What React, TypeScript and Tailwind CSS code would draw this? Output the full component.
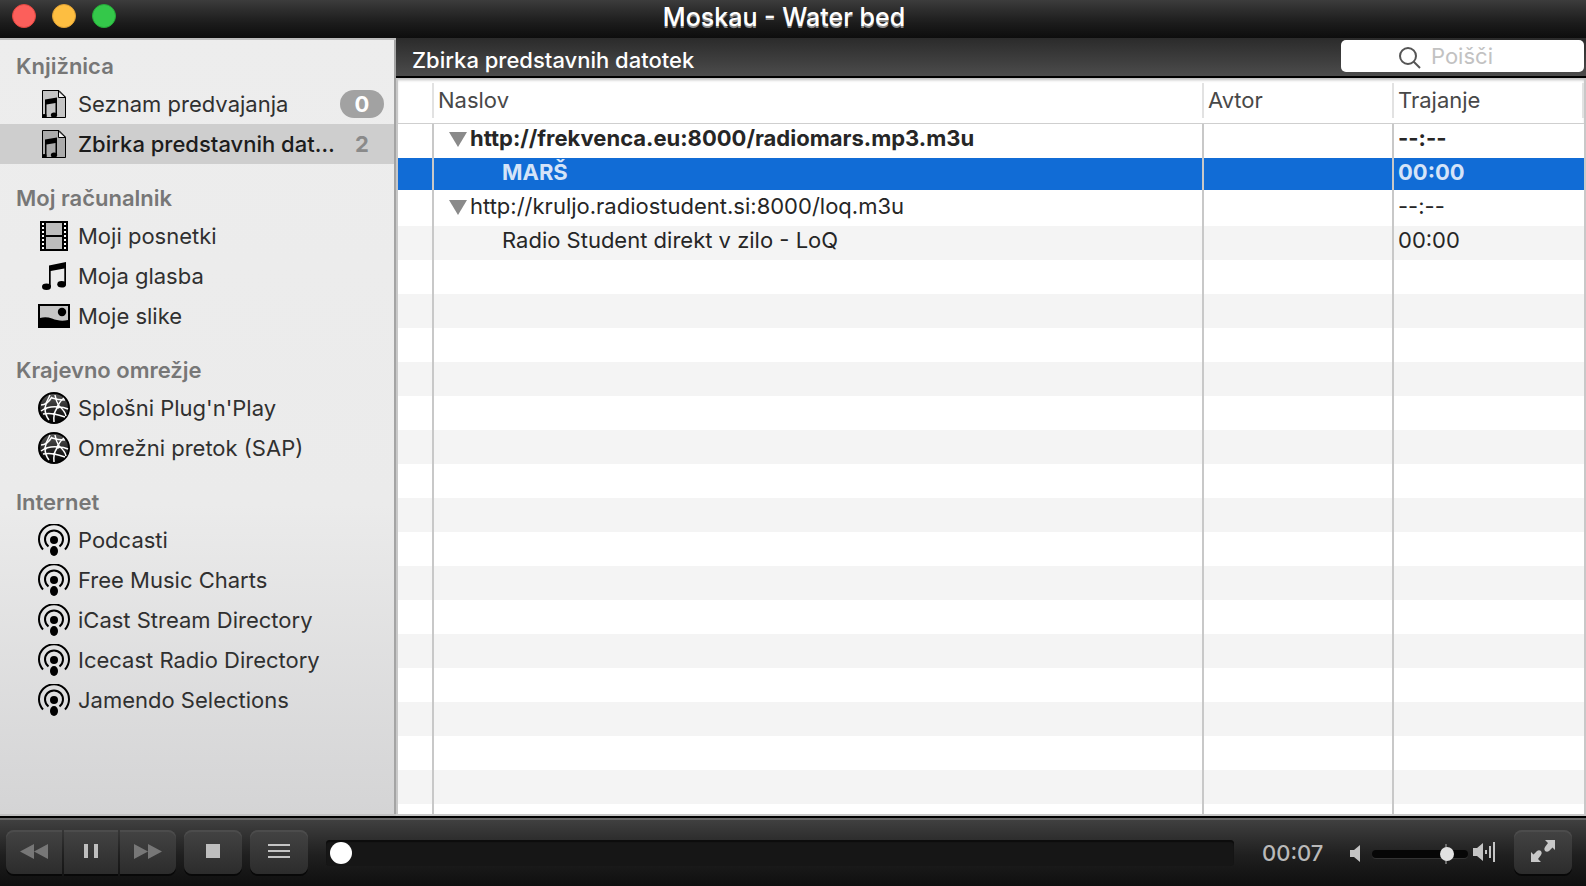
import { useState } from "react";
import type { ComponentType } from "react";

type IconProps = { className?: string };

function PlaylistIcon({ className }: IconProps) {
  return (
    <svg viewBox="0 0 24 28" className={className} aria-hidden="true">
      <path d="M.5 .5H17L23.5 7V27.5H.5Z" fill="#000" fillOpacity=".17" stroke="#000" />
      <path d="M16.5 1V7.5H23.5Z" fill="#f4f4f4" stroke="#000" />
      <path d="M3 9.500L15 7.500V24H13.500V13L4.500 14.500V27H3Z" fill="#000" />
      <ellipse cx="12" cy="25" rx="3.200" ry="2.500" fill="#000" />
      <path d="M0 24.500Q2 23.500 4.500 24.500V28H0Z" fill="#000" />
    </svg>
  );
}

function FilmIcon({ className }: IconProps) {
  const holes = [2, 6, 10, 14, 18, 22, 26];
  return (
    <svg viewBox="0 0 28 30" className={className} aria-hidden="true">
      <path d="M0 0H28V30H0Z" fill="#000" />
      <path d="M6 2H22V14H6ZM6 16H22V28H6Z" fill="#bcbcbc" />
      {holes.map((y) => (
        <path key={y} d={`M2 ${y}h2v2h-2zM24 ${y}h2v2h-2z`} fill="#fff" />
      ))}
    </svg>
  );
}

function MusicIcon({ className }: IconProps) {
  return (
    <svg viewBox="0 0 24 28" className={className} aria-hidden="true">
      <path d="M7 3.500L24 0V22.500H22.300V6.500L8.700 9V25H7Z" />
      <ellipse cx="4.500" cy="24.800" rx="4.500" ry="3.200" />
      <ellipse cx="19.700" cy="22.300" rx="4.400" ry="3.200" />
    </svg>
  );
}

function PictureIcon({ className }: IconProps) {
  return (
    <svg viewBox="0 0 32 24" className={className} aria-hidden="true">
      <path d="M0 0H32V24H0Z" />
      <path d="M2 2H30V16C24 17.500 19 16.500 14 14.500C10 13 6 12.800 2 14Z" fill="#c6c6c6" />
      <circle cx="24" cy="8" r="4.200" />
    </svg>
  );
}

function NetworkIcon({ className }: IconProps) {
  return (
    <svg viewBox="0 0 32 32" className={className} aria-hidden="true">
      <defs>
        <linearGradient id="globe" x1="0" y1="0" x2="0" y2="1">
          <stop offset="0" stopColor="#5a5a5a" />
          <stop offset=".6" stopColor="#222" />
          <stop offset="1" stopColor="#000" />
        </linearGradient>
      </defs>
      <circle cx="16" cy="16" r="15" fill="url(#globe)" stroke="#000" strokeWidth="2" />
      <g fill="none" stroke="#fff" strokeWidth="1.500">
        <path d="M12 3Q8 10 7 16Q7 23 11 28" />
        <path d="M3 13Q9 13 14 5" />
        <path d="M17 3Q18 9 21 14Q27 19 28 24" />
        <path d="M26 6Q21 10 19 16Q15 22 16 30" />
        <path d="M3 19Q10 14 20 15Q26 15 30 17" />
        <path d="M14 6Q20 8 27 8" />
        <path d="M5 22Q11 21 16 22Q21 23 27 25" />
      </g>
      <g fill="#fff">
        <circle cx="20" cy="15" r="1.700" />
        <circle cx="7.500" cy="16.500" r="1.300" />
        <circle cx="16" cy="22" r="1.300" />
      </g>
    </svg>
  );
}

function PodcastIcon({ className }: IconProps) {
  return (
    <svg viewBox="0 0 32 32" className={className} aria-hidden="true">
      <g fill="none" stroke="#000" strokeWidth="2">
        <path d="M5 25.500A15 15 0 1 1 27 25.500" />
        <path d="M10.500 22.500A9 9 0 1 1 21.500 22.500" />
      </g>
      <circle cx="16" cy="16" r="4" />
      <ellipse cx="16" cy="27" rx="4" ry="5" />
    </svg>
  );
}

interface Item {
  label: string;
  icon: ComponentType<IconProps>;
  iconClass: string;
  badge?: string;
}

const sections: { title: string; items: Item[] }[] = [
  {
    title: "Knjižnica",
    items: [
      { label: "Seznam predvajanja", icon: PlaylistIcon, iconClass: "h-7 w-6", badge: "0" },
      { label: "Zbirka predstavnih dat…", icon: PlaylistIcon, iconClass: "h-7 w-6", badge: "2" },
    ],
  },
  {
    title: "Moj računalnik",
    items: [
      { label: "Moji posnetki", icon: FilmIcon, iconClass: "h-[30px] w-7" },
      { label: "Moja glasba", icon: MusicIcon, iconClass: "h-7 w-6" },
      { label: "Moje slike", icon: PictureIcon, iconClass: "h-6 w-8" },
    ],
  },
  {
    title: "Krajevno omrežje",
    items: [
      { label: "Splošni Plug'n'Play", icon: NetworkIcon, iconClass: "size-8" },
      { label: "Omrežni pretok (SAP)", icon: NetworkIcon, iconClass: "size-8" },
    ],
  },
  {
    title: "Internet",
    items: [
      { label: "Podcasti", icon: PodcastIcon, iconClass: "size-8" },
      { label: "Free Music Charts", icon: PodcastIcon, iconClass: "size-8" },
      { label: "iCast Stream Directory", icon: PodcastIcon, iconClass: "size-8" },
      { label: "Icecast Radio Directory", icon: PodcastIcon, iconClass: "size-8" },
      { label: "Jamendo Selections", icon: PodcastIcon, iconClass: "size-8" },
    ],
  },
];

const tracks = [
  { title: "http://frekvenca.eu:8000/radiomars.mp3.m3u", time: "--:--", group: true, playing: true },
  { title: "MARŠ", time: "00:00", group: false, playing: true },
  { title: "http://kruljo.radiostudent.si:8000/loq.m3u", time: "--:--", group: true, playing: false },
  { title: "Radio Student direkt v zilo - LoQ", time: "00:00", group: false, playing: false },
];

const emptyRows = Array.from({ length: 17 }, (_, i) => i + tracks.length);

function TitleBar() {
  return (
    <header className="flex h-[38px] shrink-0 items-start bg-linear-to-b from-[#3c3c3c] via-[#1c1c1c] via-60% to-[#0d0d0d] pl-3">
      <div className="flex w-[104px] gap-4 pt-1">
        <button aria-label="Zapri" className="size-6 rounded-full border border-[#e2463f] bg-[#fc5f5b]" />
        <button aria-label="Pomanjšaj" className="size-6 rounded-full border border-[#dfa033] bg-[#fdbe41]" />
        <button aria-label="Povečaj" className="size-6 rounded-full border border-[#24ab37] bg-[#34c84a]" />
      </div>
      <h1 className="flex-1 pr-[134px] text-center text-[25px] leading-[34px] font-medium text-white [text-shadow:0_2px_0_#8c8c8c]">
        Moskau - Water bed
      </h1>
    </header>
  );
}

function Sidebar() {
  const [selected, setSelected] = useState("Zbirka predstavnih dat…");
  return (
    <nav className="w-[396px] shrink-0 overflow-hidden border-t-2 border-b-2 border-t-[#bdbdbd] border-b-[#c0c0c0] bg-linear-to-b from-[#ededed] via-[#ebebeb] via-60% to-[#d4d4d5]">
      <div className="h-full border-r-2 border-[#a4a4a4]">
        {sections.map((section) => (
          <section key={section.title} className="group">
            <h2 className="flex h-[52px] items-center pt-4 pl-4 text-[22px] leading-7 font-semibold text-[#777] group-first:h-11 group-first:pt-2">
              {section.title}
            </h2>
            <ul>
              {section.items.map(({ label, icon: Icon, iconClass, badge }) => (
                <li key={label}>
                  <button
                    onClick={() => setSelected(label)}
                    className={`flex h-10 w-full items-center pr-[10px] pl-[38px] text-left text-[22px] leading-7 ${
                      label === selected ? "bg-[#cecece] font-medium text-[#1c1c1c]" : "text-[#303030]"
                    }`}
                  >
                    <span className="flex w-8 shrink-0 justify-center">
                      <Icon className={iconClass} />
                    </span>
                    <span className="flex-1 pl-2 whitespace-nowrap">{label}</span>
                    {badge && (
                      <span
                        className={`w-11 shrink-0 rounded-full text-center font-bold ${
                          label === selected ? "text-[#8a8a8a]" : "bg-[#a2a2a2] text-white"
                        }`}
                      >
                        {badge}
                      </span>
                    )}
                  </button>
                </li>
              ))}
            </ul>
          </section>
        ))}
      </div>
    </nav>
  );
}

function Toolbar() {
  return (
    <div className="flex h-10 shrink-0 items-start justify-between border-b-2 border-black bg-linear-to-b from-[#2b2b2b] to-[#4c4c4c] pr-0.5 pl-4">
      <h2 className="pt-2 text-[22px] leading-7 font-medium text-white">Zbirka predstavnih datotek</h2>
      <label className="mt-0.5 flex h-8 w-[243px] items-center rounded-[5px] bg-white pl-[58px]">
        <svg viewBox="0 0 22 22" className="mt-1 size-[22px] shrink-0" fill="none" stroke="#555" strokeWidth="2">
          <circle cx="9" cy="9" r="8" />
          <path d="M14.500 14.500L21 21" />
        </svg>
        <input
          type="search"
          aria-label="Poišči"
          placeholder="Poišči"
          className="w-full min-w-0 pl-[10px] text-[22px] leading-7 outline-none placeholder:text-[#c2c2c2]"
        />
      </label>
    </div>
  );
}

function HeadCell({ children }: { children: string }) {
  return (
    <th scope="col" className="group border-b border-[#cfcfcf] p-0 text-left font-normal">
      <div className="-ml-0.5 mt-[5px] mb-[5px] h-[35px] border-l-2 border-[#e2e2e2] pl-1 leading-[35px] text-[#484848] group-last:border-r-2">
        {children}
      </div>
    </th>
  );
}

function Playlist() {
  const [current, setCurrent] = useState(1);
  return (
    <div className="min-h-0 flex-1 overflow-hidden border-x-2 border-b-2 border-[#c8c8c8] bg-white shadow-[inset_0_3px_3px_-1px_#bbb]">
      <table className="w-full table-fixed border-separate border-spacing-0 text-[22px]">
        <colgroup>
          <col className="w-9" />
          <col />
          <col className="w-[190px]" />
          <col className="w-[190px]" />
        </colgroup>
        <thead>
          <tr>
            <td className="border-b border-[#cfcfcf] p-0" />
            <HeadCell>Naslov</HeadCell>
            <HeadCell>Avtor</HeadCell>
            <HeadCell>Trajanje</HeadCell>
          </tr>
        </thead>
        <tbody className="leading-7 text-[#262626]">
          {tracks.map((track, i) => {
            const active = i === current;
            return (
              <tr
                key={track.title}
                onClick={() => setCurrent(i)}
                className={`h-[34px] *:p-0 *:align-top *:whitespace-nowrap ${track.playing ? "font-bold" : ""} ${
                  active
                    ? "text-[#d5e4f8] *:bg-[#116cd6] *:shadow-[inset_0_-2px_0_#fff]"
                    : "odd:bg-white even:bg-[#f4f4f4]"
                }`}
              >
                <td className="border-r-2 border-[#c8c8c8]" />
                <td className="border-r-2 border-[#c8c8c8]">
                  {track.group ? (
                    <div className="flex items-center pl-[15px]">
                      <button aria-label="Strni" className="mt-0.5 mr-[3px] w-[18px]">
                        <svg viewBox="0 0 18 15" className="w-[18px]" fill="#8a8a8a">
                          <path d="M0 0H18L9 15Z" />
                        </svg>
                      </button>
                      {track.title}
                    </div>
                  ) : (
                    <div className="pl-[68px]">{track.title}</div>
                  )}
                </td>
                <td className="border-r-2 border-[#c8c8c8]" />
                <td>
                  <div className="pl-1">{track.time}</div>
                </td>
              </tr>
            );
          })}
          {emptyRows.map((n) => (
            <tr key={n} className="h-[34px] odd:bg-white even:bg-[#f4f4f4]">
              <td className="border-r-2 border-[#c8c8c8] p-0" />
              <td className="border-r-2 border-[#c8c8c8] p-0" />
              <td className="border-r-2 border-[#c8c8c8] p-0" />
              <td className="p-0" />
            </tr>
          ))}
        </tbody>
      </table>
    </div>
  );
}

const buttonClass =
  "grid h-11 place-items-center bg-linear-to-b from-[#434343] to-[#2c2c2c] pb-0.5 shadow-[inset_0_2px_0_#4c4c4c,0_2px_0_#080808]";

function Controls() {
  const [position, setPosition] = useState(0);
  const [volume, setVolume] = useState(83);
  return (
    <footer className="flex h-[70px] shrink-0 items-center border-t-2 border-black bg-linear-to-b from-[#424242] via-[#1f1f1f] via-55% to-[#0f0f0f] pr-[14px] pl-1.5 shadow-[inset_0_2px_0_#686868]">
      <div className="flex gap-0.5">
        <button aria-label="Nazaj" className={`${buttonClass} w-14 rounded-l-lg`}>
          <svg viewBox="0 0 28 15" className="w-7" fill="#777">
            <path d="M0 7.500L14 0V15ZM14 7.500L28 0V15Z" />
          </svg>
        </button>
        <button aria-label="Premor" className={`${buttonClass} w-[54px]`}>
          <svg viewBox="0 0 14 14" className="w-3.5" fill="#bfbfbf">
            <path d="M0 0H4V14H0ZM10 0H14V14H10Z" />
          </svg>
        </button>
        <button aria-label="Naprej" className={`${buttonClass} w-14 rounded-r-lg`}>
          <svg viewBox="0 0 28 15" className="w-7" fill="#777">
            <path d="M0 0L14 7.500L0 15ZM14 0L28 7.500L14 15Z" />
          </svg>
        </button>
      </div>
      <button aria-label="Ustavi" className={`${buttonClass} ml-2 w-[58px] rounded-lg`}>
        <svg viewBox="0 0 14 14" className="w-3.5" fill="#bfbfbf">
          <path d="M0 0H14V14H0Z" />
        </svg>
      </button>
      <button aria-label="Seznam" className={`${buttonClass} ml-2 w-[58px] rounded-lg`}>
        <svg viewBox="0 0 22 14" className="w-[22px]" fill="#c4c4c4">
          <path d="M0 0H22V2H0ZM0 6H22V8H0ZM0 12H22V14H0Z" />
        </svg>
      </button>
      <input
        type="range"
        aria-label="Položaj"
        value={position}
        onChange={(e) => setPosition(Number(e.target.value))}
        className="mt-0.5 ml-[18px] h-[26px] min-w-0 flex-1 appearance-none rounded-[4px] bg-[#161616] px-1 shadow-[inset_0_2px_1px_#0c0c0c] [&::-webkit-slider-thumb]:size-[22px] [&::-webkit-slider-thumb]:appearance-none [&::-webkit-slider-thumb]:rounded-full [&::-webkit-slider-thumb]:bg-white"
      />
      <time className="mt-0.5 ml-7 w-[60px] text-[22px] leading-7 font-medium text-[#b9b9b9]">00:07</time>
      <svg viewBox="0 0 10 17" className="mt-0.5 ml-7 w-2.5" fill="#c4c4c4" aria-hidden="true">
        <path d="M0 5H4L10 0V17L4 12H0Z" />
      </svg>
      <div className="relative mt-1 ml-3 flex w-24 items-center">
        <span className="absolute -top-1.5 right-[21px] h-5 w-0.5 bg-[#6a6a6a]" />
        <input
          type="range"
          aria-label="Glasnost"
          value={volume}
          onChange={(e) => setVolume(Number(e.target.value))}
          className="relative h-2 w-full appearance-none rounded-full bg-[#060606] shadow-[0_1px_0_#333] [&::-webkit-slider-thumb]:size-3.5 [&::-webkit-slider-thumb]:appearance-none [&::-webkit-slider-thumb]:rounded-full [&::-webkit-slider-thumb]:bg-[#e2e2e2]"
        />
      </div>
      <svg viewBox="0 0 22 20" className="ml-[5px] w-[22px]" fill="#c4c4c4" aria-hidden="true">
        <path d="M0 6H4L10 1V19L4 14H0ZM12 8H14V12H12ZM16 4H18V16H16ZM20 0H22V20H20Z" />
      </svg>
      <button aria-label="Celozaslonski način" className={`${buttonClass} ml-[19px] w-[58px] rounded-lg`}>
        <svg viewBox="0 0 24 22" className="w-6" fill="#c8c8c8">
          <path d="M14 0H24V10L21.500 7.500L18 11Q16 12.500 14 11Q12.500 9 14 7L17 3Z" />
          <path d="M10 22H0V12L2.500 14.500L6 11Q8 9.500 10 11Q11.500 13 10 15L7 19Z" />
        </svg>
      </button>
    </footer>
  );
}

export default function App() {
  return (
    <div className="flex h-screen flex-col overflow-hidden bg-white font-['Inter','Noto_Sans',sans-serif]">
      <TitleBar />
      <div className="flex min-h-0 flex-1">
        <Sidebar />
        <main className="flex min-w-0 flex-1 flex-col">
          <Toolbar />
          <Playlist />
        </main>
      </div>
      <Controls />
    </div>
  );
}
